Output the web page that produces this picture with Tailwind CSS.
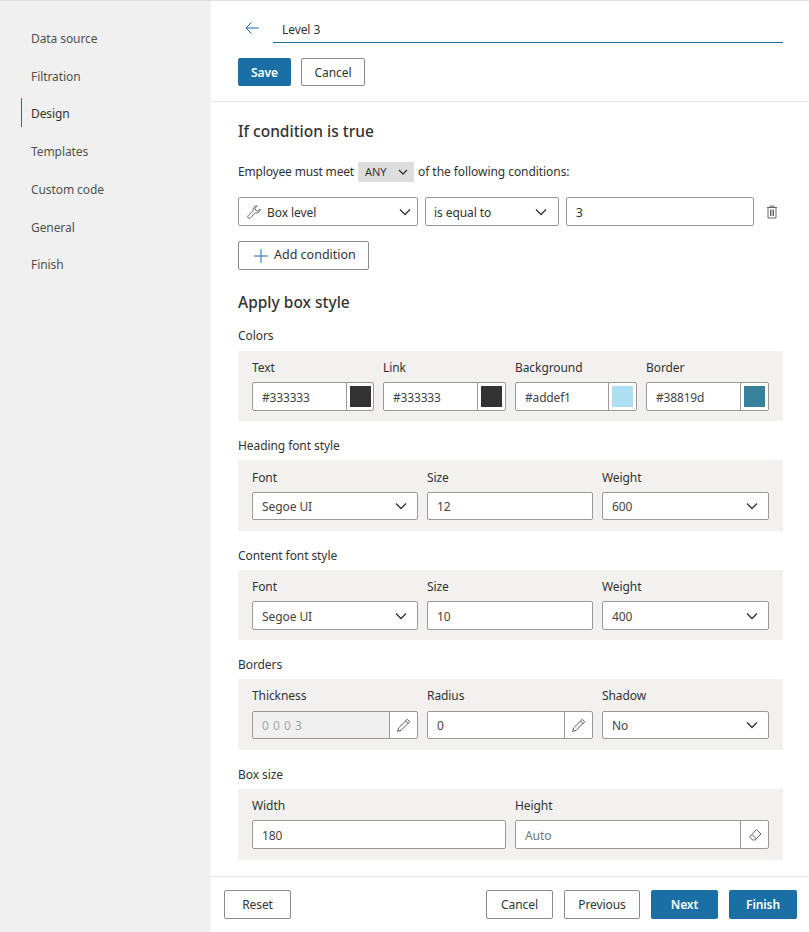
<!DOCTYPE html>
<html lang="en">
<head>
  <meta charset="UTF-8">
  <title>Box style</title>
  <script src="https://cdn.jsdelivr.net/npm/@tailwindcss/browser@4"></script>
</head>
<body class="font-['Noto_Sans',sans-serif] text-[12px] tracking-[-0.08px] text-[#333]">
<div class="flex h-[932px] w-[809px] overflow-hidden border-t border-[#e1e1e1]">

  <!-- side nav -->
  <nav class="w-[211px] shrink-0 bg-[#f0f0f0] pt-[19px] pl-[21px] text-[#505050]">
    <div class="flex h-[38px] items-center pl-[10px]">Data source</div>
    <div class="flex h-[38px] items-center pl-[10px]">Filtration</div>
    <div class="flex h-[37px] items-center text-[#333]"><span class="-mt-[4px] flex h-[29px] items-center border-l border-[#1a6fa5] pl-[9px] pt-[2px]">Design</span></div>
    <div class="flex h-[38px] items-center pl-[10px]">Templates</div>
    <div class="flex h-[38px] items-center pl-[10px]">Custom code</div>
    <div class="flex h-[37px] items-center pl-[10px]">General</div>
    <div class="flex h-[38px] items-center pl-[10px]">Finish</div>
  </nav>

  <main class="flex min-w-0 flex-1 flex-col">
    <!-- title bar -->
    <header class="h-[101px] shrink-0 border-b border-[#e8e8e8] pl-[27px] pr-[26px]">
      <div class="flex h-[42px] items-start">
        <svg class="ml-[7px] mt-[20px] h-[14px] w-[14px]" viewBox="0 0 14 14" fill="none" stroke="#1a6fa5" stroke-width="1"><path d="M14 7H1M6.500 1.500L1 7l5.500 5.500"/></svg>
        <div class="ml-[14px] flex h-[42px] flex-1 items-center border-b border-[#1a6fa5] pl-[9px] pt-[17px]">Level 3</div>
      </div>
      <div class="mt-[15px] flex gap-[10px]">
        <button class="h-[28px] w-[53px] rounded-[2px] bg-[#1a6fa5] pt-[2px] font-semibold text-white">Save</button>
        <button class="h-[28px] w-[64px] rounded-[2px] border border-[#8a8a8a] bg-white pt-[2px]">Cancel</button>
      </div>
    </header>

    <!-- form -->
    <section class="flex-1 overflow-hidden pl-[27px] pr-[26px]">
      <h2 class="mt-[18px] flex h-[24px] items-center text-[15.500px] font-medium leading-none tracking-normal">If condition is true</h2>
      <div class="mt-[18px] flex h-[20px] items-center">
        <span class="tracking-[-0.17px]">Employee must meet</span>
        <span class="ml-[4px] flex h-[20px] w-[56px] items-center justify-between bg-[#dedede] pl-[7px] pr-[6px] text-[11px]">ANY
          <svg class="h-[10px] w-[10px]" viewBox="0 0 10 10" fill="none" stroke="#333" stroke-width="1.300"><path d="M1 3l4 4 4-4"/></svg>
        </span>
        <span class="ml-[4px] tracking-[-0.06px]">of the following conditions:</span>
      </div>
      <div class="mt-[15px] flex items-center">
        <div class="flex h-[29px] w-[180px] items-center justify-between rounded-[2px] border border-[#9a9a9a] pl-[8px] pr-[6px]">
          <span class="flex items-center gap-[6px]">
            <svg class="h-[14px] w-[14px]" viewBox="0 0 14 14" fill="none" stroke="#555" stroke-width="0.900"><path d="M9.500 1a3.500 3.500 0 0 0-3.300 4.600L1.200 10.600a1.500 1.500 0 0 0 2.200 2.200l5-5A3.500 3.500 0 0 0 13 4l-2.300 2.200-2-.9-.8-2L10.300 1z"/></svg>
            <span class="pt-[2px]">Box level</span>
          </span>
          <svg class="h-[12px] w-[12px]" viewBox="0 0 12 12" fill="none" stroke="#333" stroke-width="1.300"><path d="M1 3.500l5 5 5-5"/></svg>
        </div>
        <div class="ml-[7px] flex h-[29px] w-[134px] items-center justify-between rounded-[2px] border border-[#9a9a9a] pl-[8px] pr-[11px]"><span class="pt-[2px]">is equal to</span>
          <svg class="h-[12px] w-[12px]" viewBox="0 0 12 12" fill="none" stroke="#333" stroke-width="1.300"><path d="M1 3.500l5 5 5-5"/></svg>
        </div>
        <div class="ml-[7px] flex h-[29px] w-[188px] items-center rounded-[2px] border border-[#9a9a9a] pl-[9px] pt-[2px]">3</div>
        <svg class="ml-[11px] h-[14px] w-[14px]" viewBox="0 0 14 14" fill="none" stroke="#666" stroke-width="1"><path d="M2 2.500h10M5 2.500V1h4v1.500M3 2.500V13h8V2.500M5.500 4.500v6.500M7 4.500v6.500M8.500 4.500v6.500"/></svg>
      </div>
      <button class="mt-[15px] flex h-[29px] w-[131px] items-center rounded-[2px] border border-[#8a8a8a] pl-[15px]">
        <svg class="mr-[6px] h-[14px] w-[14px]" viewBox="0 0 14 14" fill="none" stroke="#1a6fa5" stroke-width="1"><path d="M7 0v14M0 7h14"/></svg>
        <span class="text-[12.500px] tracking-normal">Add condition</span>
      </button>

      <h2 class="mt-[21px] flex h-[24px] items-center text-[15.500px] font-medium leading-none tracking-normal">Apply box style</h2>

      <div class="mt-[11px] flex h-[20px] items-center">Colors</div>
      <div class="mt-[5px] grid h-[70px] grid-cols-[122px_123px_122px_123px] gap-x-[9px] bg-[#f2f1f0] px-[14px]">
        <div>
          <div class="flex h-[31px] items-center pt-[2px]">Text</div>
          <div class="flex h-[29px] overflow-hidden rounded-[2px] border border-[#9a9a9a] bg-white">
            <span class="flex flex-1 items-center pl-[9px] pt-[2px] tracking-[-0.17px] text-[#444]">#333333</span>
            <span class="flex w-[27px] items-center justify-center border-l border-[#9a9a9a]"><span class="h-[21px] w-[21px] bg-[#333333]"></span></span>
          </div>
        </div>
        <div>
          <div class="flex h-[31px] items-center pt-[2px]">Link</div>
          <div class="flex h-[29px] overflow-hidden rounded-[2px] border border-[#9a9a9a] bg-white">
            <span class="flex flex-1 items-center pl-[9px] pt-[2px] tracking-[-0.17px] text-[#444]">#333333</span>
            <span class="flex w-[28px] items-center justify-center border-l border-[#9a9a9a]"><span class="h-[21px] w-[21px] bg-[#333333]"></span></span>
          </div>
        </div>
        <div>
          <div class="flex h-[31px] items-center pt-[2px]">Background</div>
          <div class="flex h-[29px] overflow-hidden rounded-[2px] border border-[#9a9a9a] bg-white">
            <span class="flex flex-1 items-center pl-[9px] pt-[2px] tracking-[-0.17px] text-[#444]">#addef1</span>
            <span class="flex w-[28px] items-center justify-center border-l border-[#9a9a9a]"><span class="h-[21px] w-[21px] bg-[#addef1]"></span></span>
          </div>
        </div>
        <div>
          <div class="flex h-[31px] items-center pt-[2px]">Border</div>
          <div class="flex h-[29px] overflow-hidden rounded-[2px] border border-[#9a9a9a] bg-white">
            <span class="flex flex-1 items-center pl-[9px] pt-[2px] tracking-[-0.17px] text-[#444]">#38819d</span>
            <span class="flex w-[28px] items-center justify-center border-l border-[#9a9a9a]"><span class="h-[21px] w-[21px] bg-[#38819d]"></span></span>
          </div>
        </div>
      </div>

      <div class="mt-[15px] flex h-[20px] items-center">Heading font style</div>
      <div class="mt-[4px] grid h-[71px] grid-cols-[166px_166px_167px] gap-x-[9px] bg-[#f2f1f0] px-[14px]">
        <div>
          <div class="flex h-[32px] items-center pt-[4px]">Font</div>
          <div class="flex h-[28px] items-center justify-between rounded-[2px] border border-[#9a9a9a] bg-white pl-[9px] pr-[10px]"><span class="pt-[2px] text-[#444]">Segoe UI</span>
            <svg class="h-[12px] w-[12px]" viewBox="0 0 12 12" fill="none" stroke="#333" stroke-width="1.300"><path d="M1 3.500l5 5 5-5"/></svg>
          </div>
        </div>
        <div>
          <div class="flex h-[32px] items-center pt-[4px]">Size</div>
          <div class="flex h-[28px] items-center rounded-[2px] border border-[#9a9a9a] bg-white pl-[9px] pt-[2px] text-[#444]">12</div>
        </div>
        <div>
          <div class="flex h-[32px] items-center pt-[4px]">Weight</div>
          <div class="flex h-[28px] items-center justify-between rounded-[2px] border border-[#9a9a9a] bg-white pl-[9px] pr-[10px]"><span class="pt-[2px] text-[#444]">600</span>
            <svg class="h-[12px] w-[12px]" viewBox="0 0 12 12" fill="none" stroke="#333" stroke-width="1.300"><path d="M1 3.500l5 5 5-5"/></svg>
          </div>
        </div>
      </div>

      <div class="mt-[15px] flex h-[20px] items-center">Content font style</div>
      <div class="mt-[4px] grid h-[70px] grid-cols-[166px_166px_167px] gap-x-[9px] bg-[#f2f1f0] px-[14px]">
        <div>
          <div class="flex h-[31px] items-center pt-[2px]">Font</div>
          <div class="flex h-[29px] items-center justify-between rounded-[2px] border border-[#9a9a9a] bg-white pl-[9px] pr-[10px]"><span class="pt-[2px] text-[#444]">Segoe UI</span>
            <svg class="h-[12px] w-[12px]" viewBox="0 0 12 12" fill="none" stroke="#333" stroke-width="1.300"><path d="M1 3.500l5 5 5-5"/></svg>
          </div>
        </div>
        <div>
          <div class="flex h-[31px] items-center pt-[2px]">Size</div>
          <div class="flex h-[29px] items-center rounded-[2px] border border-[#9a9a9a] bg-white pl-[9px] pt-[2px] text-[#444]">10</div>
        </div>
        <div>
          <div class="flex h-[31px] items-center pt-[2px]">Weight</div>
          <div class="flex h-[29px] items-center justify-between rounded-[2px] border border-[#9a9a9a] bg-white pl-[9px] pr-[10px]"><span class="pt-[2px] text-[#444]">400</span>
            <svg class="h-[12px] w-[12px]" viewBox="0 0 12 12" fill="none" stroke="#333" stroke-width="1.300"><path d="M1 3.500l5 5 5-5"/></svg>
          </div>
        </div>
      </div>

      <div class="mt-[15px] flex h-[20px] items-center">Borders</div>
      <div class="mt-[4px] grid h-[71px] grid-cols-[166px_166px_167px] gap-x-[9px] bg-[#f2f1f0] px-[14px]">
        <div>
          <div class="flex h-[32px] items-center pt-[2px]">Thickness</div>
          <div class="flex h-[28px] overflow-hidden rounded-[2px] border border-[#9a9a9a] bg-white">
            <span class="flex flex-1 items-center bg-[#f0f0f0] pl-[9px] pt-[2px] tracking-[0.5px] text-[#a6a6a6]">0 0 0 3</span>
            <span class="flex w-[28px] items-center justify-center border-l border-[#9a9a9a]">
              <svg class="h-[15px] w-[15px]" viewBox="0 0 14 14" fill="none" stroke="#555" stroke-width="0.900"><path d="M10.500 1.200l2.300 2.300L4.800 11.500 1.500 12.500l1-3.300zM9 2.700l2.300 2.300"/></svg>
            </span>
          </div>
        </div>
        <div>
          <div class="flex h-[32px] items-center pt-[2px]">Radius</div>
          <div class="flex h-[28px] overflow-hidden rounded-[2px] border border-[#9a9a9a] bg-white">
            <span class="flex flex-1 items-center pl-[9px] pt-[2px] text-[#444]">0</span>
            <span class="flex w-[28px] items-center justify-center border-l border-[#9a9a9a]">
              <svg class="h-[15px] w-[15px]" viewBox="0 0 14 14" fill="none" stroke="#555" stroke-width="0.900"><path d="M10.500 1.200l2.300 2.300L4.800 11.500 1.500 12.500l1-3.300zM9 2.700l2.300 2.300"/></svg>
            </span>
          </div>
        </div>
        <div>
          <div class="flex h-[32px] items-center pt-[2px]">Shadow</div>
          <div class="flex h-[28px] items-center justify-between rounded-[2px] border border-[#9a9a9a] bg-white pl-[9px] pr-[10px]"><span class="pt-[2px] text-[#444]">No</span>
            <svg class="h-[12px] w-[12px]" viewBox="0 0 12 12" fill="none" stroke="#333" stroke-width="1.300"><path d="M1 3.500l5 5 5-5"/></svg>
          </div>
        </div>
      </div>

      <div class="mt-[15px] flex h-[20px] items-center">Box size</div>
      <div class="mt-[4px] grid h-[71px] grid-cols-2 gap-x-[9px] bg-[#f2f1f0] px-[14px]">
        <div>
          <div class="flex h-[31px] items-center pt-[2px]">Width</div>
          <div class="flex h-[29px] items-center rounded-[2px] border border-[#9a9a9a] bg-white pl-[9px] pt-[2px] text-[#444]">180</div>
        </div>
        <div>
          <div class="flex h-[31px] items-center pt-[2px]">Height</div>
          <div class="flex h-[29px] overflow-hidden rounded-[2px] border border-[#9a9a9a] bg-white">
            <span class="flex flex-1 items-center pl-[9px] pt-[2px] text-[#777]">Auto</span>
            <span class="flex w-[28px] items-center justify-center border-l border-[#9a9a9a]">
              <svg class="h-[14px] w-[14px]" viewBox="0 0 14 14" fill="none" stroke="#555" stroke-width="0.900"><path d="M8.500 1.500l4.500 4.500-6 6H4.500L1.500 9zM4 6.500l4.500 4.500"/></svg>
            </span>
          </div>
        </div>
      </div>
    </section>

    <!-- footer -->
    <footer class="flex h-[56px] shrink-0 items-start border-t border-[#e8e8e8] pl-[13px] pr-[12px] pt-[13px]">
      <button class="h-[29px] w-[67px] rounded-[2px] border border-[#8a8a8a] pt-[1px]">Reset</button>
      <button class="ml-auto h-[29px] w-[67px] rounded-[2px] border border-[#8a8a8a] pt-[1px]">Cancel</button>
      <button class="ml-[11px] h-[29px] w-[76px] rounded-[2px] border border-[#8a8a8a] pt-[1px]">Previous</button>
      <button class="ml-[11px] h-[29px] w-[67px] rounded-[2px] bg-[#1a6fa5] pt-[1px] font-semibold text-white">Next</button>
      <button class="ml-[11px] h-[29px] w-[68px] rounded-[2px] bg-[#1a6fa5] pt-[1px] font-semibold text-white">Finish</button>
    </footer>
  </main>
</div>
</body>
</html>
